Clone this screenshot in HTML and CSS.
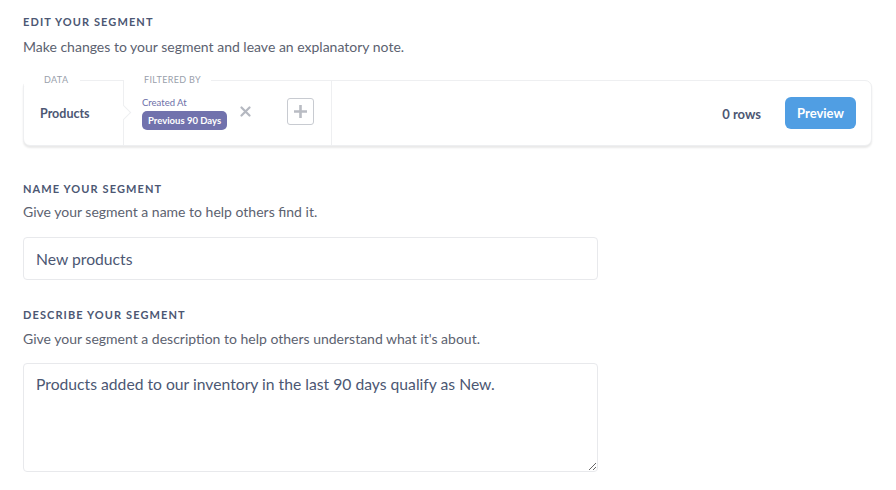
FILE: index.html
```html
<!DOCTYPE html>
<html>
<head>
<meta charset="utf-8">
<link rel="stylesheet" href="styles.css">
</head>
<body>
<div class="page">
  <section class="sec sec-edit">
    <h2 class="sec-title">Edit Your Segment</h2>
    <p class="sec-desc">Make changes to your segment and leave an explanatory note.</p>
    <div class="builder">
      <div class="step step-data">
        <span class="step-label">Data</span>
        <span class="table-name">Products</span>
      </div>
      <div class="step step-filter">
        <span class="step-label">Filtered by</span>
        <div class="filter">
          <span class="filter-field">Created At</span>
          <span class="filter-pill">Previous 90 Days</span>
        </div>
        <svg class="remove" width="11" height="11" viewBox="0 0 11 11"><path d="M1.5 1.5 L9.5 9.5 M9.5 1.5 L1.5 9.5" stroke="#b4b8c0" stroke-width="2.2" stroke-linecap="round"/></svg>
        <span class="add">
          <svg width="15" height="15" viewBox="0 0 15 15"><path d="M7.5 1 V14 M1 7.5 H14" stroke="#b9bcc3" stroke-width="2.6"/></svg>
        </span>
      </div>
      <div class="spacer"></div>
      <span class="rows">0 rows</span>
      <button class="preview">Preview</button>
    </div>
  </section>

  <section class="sec sec-name">
    <h2 class="sec-title">Name Your Segment</h2>
    <p class="sec-desc">Give your segment a name to help others find it.</p>
    <input class="field" type="text" value="New products">
  </section>

  <section class="sec sec-describe">
    <h2 class="sec-title">Describe Your Segment</h2>
    <p class="sec-desc">Give your segment a description to help others understand what it's about.</p>
    <textarea class="field area">Products added to our inventory in the last 90 days qualify as New.</textarea>
  </section>
</div>
</body>
</html>
```

FILE: styles.css
```css
* { box-sizing: border-box; }
html, body { margin: 0; padding: 0; background: #fff; }
body { font-family: Lato, "Open Sans", sans-serif; color: #4c5773; }
.page { padding: 14px 24px 0 23px; }

.sec-title {
  margin: 0;
  font-size: 11px;
  line-height: 16px;
  font-weight: 700;
  letter-spacing: 0.1em;
  text-transform: uppercase;
  color: #4c5773;
}
.sec-desc {
  margin: 7px 0 0;
  font-size: 14px;
  line-height: 20px;
  color: #5c6270;
}

.builder {
  margin-top: 23px;
  height: 66px;
  display: flex;
  align-items: center;
  border: 1px solid #eeeff1;
  border-radius: 7px;
  box-shadow: 0 2px 2px rgba(0,0,0,0.09);
  background: #fff;
}
.step {
  position: relative;
  height: 100%;
  display: flex;
  align-items: center;
  border-right: 1px solid #eeeff1;
}
.step-label {
  position: absolute;
  top: -7px;
  background: #fff;
  padding: 0 12px 0 20px;
  font-size: 9px;
  line-height: 12px;
  letter-spacing: 0.04em;
  text-transform: uppercase;
  color: #9aa0ab;
}
.step-data { width: 100px; padding-left: 16px; }
.step-data .step-label { left: 0; padding-left: 20px; }
.step-data::after {
  content: "";
  position: absolute;
  right: -6px;
  top: 26px;
  width: 10px;
  height: 10px;
  background: #fff;
  border-top: 1px solid #eeeff1;
  border-right: 1px solid #eeeff1;
  transform: rotate(45deg);
}
.table-name { font-size: 12.5px; font-weight: 700; color: #4c5773; }

.step-filter { width: 208px; padding-left: 18px; }
.step-filter .step-label { left: 0; padding-left: 20px; padding-right: 10px; }
.filter { display: flex; flex-direction: column; align-items: flex-start; margin-top: 1px; }
.filter-field { font-size: 9.5px; line-height: 12px; color: #6c6fa8; }
.filter-pill {
  margin-top: 2px;
  background: #7172ad;
  color: #fff;
  font-size: 9.5px;
  font-weight: 700;
  line-height: 19px;
  padding: 0 6px;
  border-radius: 5px;
  white-space: nowrap;
}
.remove { margin-left: 13px; margin-top: -3px; }
.add {
  margin-left: 36px;
  width: 27px;
  height: 27px;
  border: 1px solid #c8cbd1;
  border-radius: 3px;
  display: flex;
  align-items: center;
  justify-content: center;
  margin-top: -3px;
}

.spacer { flex: 1; }
.rows { font-size: 13px; font-weight: 700; color: #4c5773; margin-right: 24px; margin-top: 1px; }
.preview {
  margin-right: 15px;
  width: 71px;
  height: 32px;
  border: none;
  border-radius: 6px;
  background: #509ee3;
  color: #fff;
  font-family: Lato, "Open Sans", sans-serif;
  font-size: 13px;
  font-weight: 700;
  padding: 0;
}

.sec-name { margin-top: 35px; }
.sec-name .sec-desc { margin-top: 5px; }
.field {
  display: block;
  width: 575px;
  margin-top: 15px;
  border: 1px solid #e8e9ec;
  border-radius: 4px;
  font-family: Lato, "Open Sans", sans-serif;
  font-size: 15.7px;
  color: #4c5773;
  outline: none;
  background: #fff;
}
input.field { height: 43px; padding: 0 12px; }
.sec-describe { margin-top: 27px; }
.sec-describe .sec-desc { margin-top: 6px; }
.area {
  margin-top: 14px;
  height: 109px;
  padding: 10px 12px;
  line-height: 20px;
  resize: vertical;
}
```
